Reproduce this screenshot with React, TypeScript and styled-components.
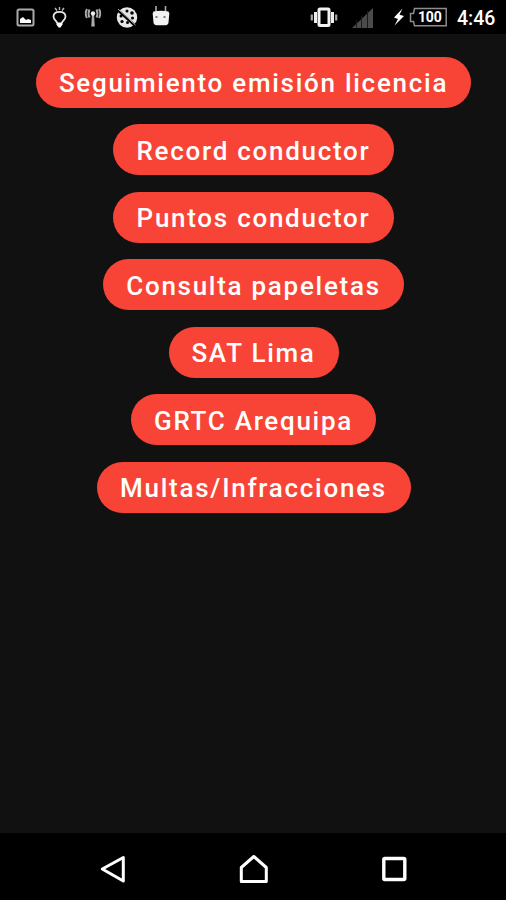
import React from "react";
import styled, { createGlobalStyle } from "styled-components";

const GlobalStyle = createGlobalStyle`
  * { box-sizing: border-box; }
  html, body { margin: 0; padding: 0; background: #111; }
`;

const Screen = styled.div`
  display: flex;
  flex-direction: column;
  width: 506px;
  height: 900px;
  overflow: hidden;
  background: #111111;
  font-family: Roboto, "Liberation Sans", sans-serif;
`;

const StatusBar = styled.header`
  display: flex;
  justify-content: space-between;
  height: 34px;
  flex: none;
  background: #000;
`;

const StatusGroup = styled.div`
  display: flex;
  height: 34px;
`;

const StatusIcon = styled.svg`
  display: block;
  flex: none;
  height: 34px;
`;

const Battery = styled.div`
  display: grid;
  width: 40px;
  height: 34px;
`;

const BatteryShape = styled(StatusIcon)`
  grid-area: 1 / 1;
`;

const BatteryLevel = styled.span`
  grid-area: 1 / 1;
  padding: 9px 0 0 9px;
  color: #fff;
  font-size: 14px;
  line-height: 17px;
  font-weight: 700;
  letter-spacing: -0.2px;
`;

const Clock = styled.time`
  width: 57px;
  padding: 7px 0 0 8px;
  color: #fff;
  font-size: 19.5px;
  line-height: 24px;
  font-weight: 500;
`;

const Menu = styled.main`
  display: flex;
  flex: 1;
  flex-direction: column;
  align-items: center;
  gap: 16.5px;
  padding: 22.7px 0 0 1px;
`;

const MenuButton = styled.button<{ $width: number }>`
  width: ${({ $width }) => $width}px;
  height: 51px;
  flex: none;
  padding: 2px 0 0;
  border: 0;
  border-radius: 26px;
  background: #f84437;
  color: #fff;
  font: 500 26px/30px Roboto, "Liberation Sans", sans-serif;
  letter-spacing: 1.72px;
  white-space: nowrap;
`;

const NavBar = styled.nav`
  display: grid;
  grid-template-columns: repeat(3, 140.6px);
  justify-content: center;
  height: 67px;
  flex: none;
  background: #000;
`;

const NavButton = styled.button`
  display: flex;
  justify-content: center;
  padding: 18px 0 0;
  border: 0;
  background: none;
`;

const NavIcon = styled.svg`
  width: 36px;
  height: 36px;
  fill: none;
  stroke: #fff;
  stroke-width: 3;
`;

const actions = [
  { label: "Seguimiento emisión licencia", width: 434.5 },
  { label: "Record conductor", width: 281 },
  { label: "Puntos conductor", width: 281 },
  { label: "Consulta papeletas", width: 300.5 },
  { label: "SAT Lima", width: 170 },
  { label: "GRTC Arequipa", width: 245.5 },
  { label: "Multas/Infracciones", width: 314 },
];

const Notifications = () => (
  <StatusIcon width="180" viewBox="0 0 180 34">
    <rect x="17.5" y="9.5" width="16" height="16" rx="1.5" fill="none" stroke="#aaa" strokeWidth="2" />
    <path d="M20 23v-4l3-2 3 3 2-1 3 1v3Z" fill="#fff" />
    <g fill="none" stroke="#e6e6e6" strokeWidth="1.8">
      <path d="M57 23c0-2-3.5-3-3.5-6.5 0-3 2.5-4.7 6-4.7s6 1.7 6 4.7c0 3.5-3.5 4.5-3.5 6.5" />
      <path d="M59.5 7v3M55 8l2 2.5M64 8l-2 2.5" stroke="#bbb" strokeWidth="1.4" />
    </g>
    <path d="M56.5 22.500h6v2l-2 3h-2l-2-3Z" fill="#fff" />
    <path d="m92 14-.8 12.500h3.600L94 14Z" fill="#aaa" />
    <circle cx="93" cy="13.5" r="2.2" fill="#eee" />
    <g fill="none" stroke="#aaa" strokeWidth="2">
      <path d="M89.5 9.500q-2 4 0 8M96.500 9.500q2 4 0 8" />
      <path d="M87 9q-2.500 4.500 0 9M99 9q2.500 4.500 0 9" />
    </g>
    <circle cx="127" cy="17.5" r="10.2" fill="#e7e7e7" />
    <g fill="#000">
      <circle cx="127" cy="11" r="1.5" /><circle cx="132" cy="13" r="1.8" />
      <circle cx="121" cy="16" r="1.5" /><circle cx="122" cy="21.5" r="1.6" />
      <circle cx="127.5" cy="22.5" r="1.5" /><circle cx="132.5" cy="18" r="1.5" />
    </g>
    <path d="m116.500 9 19 17" stroke="#000" strokeWidth="2.6" />
    <path d="m118 9 17.500 16" stroke="#ddd" strokeWidth="0.8" />
    <path d="M156 6v6M165.500 6v6" stroke="#aaa" strokeWidth="1.6" />
    <path d="M153.500 11.500q7.500-1.500 15 0l.8 2-.8 9q-.5 2.800-3 2.800h-9q-2.500 0-3-2.800l-.8-9Z" fill="#f2f2f2" />
    <path d="M155.500 17h2M163.500 17h2" stroke="#555" strokeWidth="1.5" />
  </StatusIcon>
);

const Vibrate = () => (
  <StatusIcon width="31" viewBox="308 0 31 34">
    <rect x="319" y="9" width="10" height="16.5" rx="1" fill="none" stroke="#f1f1f1" strokeWidth="3" />
    <path d="M315.500 12v11M332.500 12v11" stroke="#eee" strokeWidth="3" />
    <path d="M311.800 14.500v6M336.200 14.500v6" stroke="#aaa" strokeWidth="2.2" />
  </StatusIcon>
);

const Signal = () => (
  <StatusIcon width="54" viewBox="339 0 54 34">
    <path d="M352 28 373 8v20Z" fill="#4b4b4b" />
    <path d="M356.500 20v8M361.500 16v12M367.500 11v17" stroke="#1b1b1b" strokeWidth="1" />
  </StatusIcon>
);

const Bolt = () => (
  <StatusIcon width="16" viewBox="393 0 16 34">
    <path d="m402.500 8.500-8.500 9 4 1.500-3.500 6.500 9.500-9.500-4.500-1.200Z" fill="#fff" />
  </StatusIcon>
);

export default function App() {
  return (
    <>
      <GlobalStyle />
      <Screen>
        <StatusBar>
          <Notifications />
          <StatusGroup>
            <Vibrate />
            <Signal />
            <Bolt />
            <Battery>
              <BatteryShape width="40" viewBox="409 0 40 34" fill="none">
                <path d="M414.500 8.500h31.700v17.300h-31.700l-1-4.300h-3v-8h3Z" stroke="#8d8d8d" strokeWidth="1.5" />
              </BatteryShape>
              <BatteryLevel>100</BatteryLevel>
            </Battery>
            <Clock>4:46</Clock>
          </StatusGroup>
        </StatusBar>
        <Menu>
          {actions.map(({ label, width }) => (
            <MenuButton key={label} $width={width}>{label}</MenuButton>
          ))}
        </Menu>
        <NavBar>
          <NavButton aria-label="Atrás">
            <NavIcon viewBox="94.2 851 36 36"><path d="M102.500 869 123.500 857.500v23.500Z" strokeLinejoin="round" /></NavIcon>
          </NavButton>
          <NavButton aria-label="Inicio">
            <NavIcon viewBox="235.200 851 36 36"><path d="m254 856.500 12.500 11v14h-25v-14Z" strokeLinejoin="round" /></NavIcon>
          </NavButton>
          <NavButton aria-label="Recientes">
            <NavIcon viewBox="376.200 851 36 36"><rect x="384" y="858.500" width="21" height="21" rx="1" strokeWidth="3.4" /></NavIcon>
          </NavButton>
        </NavBar>
      </Screen>
    </>
  );
}
